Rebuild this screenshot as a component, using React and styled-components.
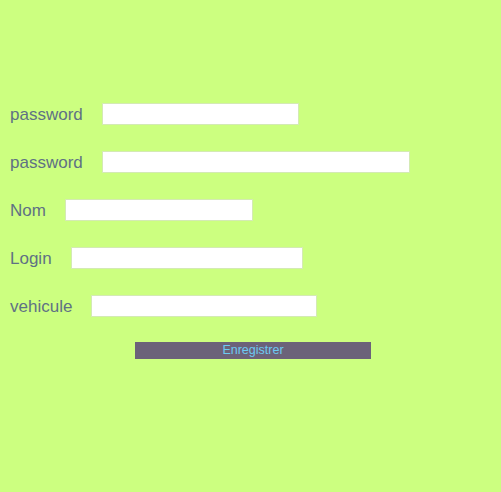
import React from 'react';
import styled, { createGlobalStyle } from 'styled-components';

const fields = [
  { label: 'password', width: 197, type: 'password' },
  { label: 'password', width: 308, type: 'password' },
  { label: 'Nom', width: 188 },
  { label: 'Login', width: 232 },
  { label: 'vehicule', width: 226 },
];

const Global = createGlobalStyle`
  html, body {
    margin: 0;
    background: #ccff80;
  }
  body {
    font-family: "Liberation Sans", Arial, sans-serif;
  }
`;

const Form = styled.form`
  display: flex;
  flex-direction: column;
  padding: 103px 0 0 10px;
  height: 492px;
  box-sizing: border-box;
`;

const Row = styled.div`
  display: flex;
  align-items: flex-start;
  gap: 19px;
  height: 22px;
  margin-bottom: 26px;
`;

const Label = styled.label`
  font-size: 17px;
  color: #5f7184;
  line-height: 22px;
  padding-top: 1px;
`;

const Input = styled.input`
  box-sizing: border-box;
  width: ${p => p.$w}px;
  height: 22px;
  margin: 0;
  padding: 0 3px;
  background: #fff;
  border: 1px solid #d4eab4;
  outline: none;
`;

const Submit = styled.button`
  box-sizing: border-box;
  align-self: flex-start;
  margin: -1px 0 0 125px;
  width: 236px;
  height: 17px;
  padding: 0;
  background: #6b6279;
  border: none;
  color: #6ccaf2;
  font-family: "Liberation Sans", Arial, sans-serif;
  font-size: 12.5px;
  line-height: 17px;
  cursor: pointer;
`;

const App = () => (
  <>
    <Global />
    <Form onSubmit={e => e.preventDefault()}>
      {fields.map(({ label, width, type }, i) => (
        <Row key={i}>
          <Label>{label}</Label>
          <Input $w={width} type={type || 'text'} />
        </Row>
      ))}
      <Submit type="submit">Enregistrer</Submit>
    </Form>
  </>
);

export default App;
